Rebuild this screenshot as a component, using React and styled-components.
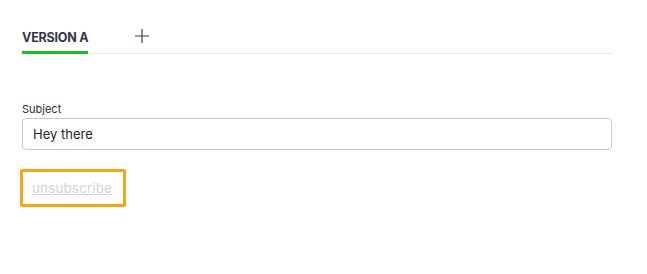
import styled, { createGlobalStyle } from "styled-components"

const GlobalStyle = createGlobalStyle`
    html, body {
        margin: 0;
        padding: 0;
        background: #ffffff;
        font-family: "Inter", "Noto Sans", sans-serif;
    }
`

export default function App() {
    return (
        <>
            <GlobalStyle />
            <Page>
                <Tabs>
                    <Tab active>VERSION A</Tab>
                    <AddTab aria-label="Add version">
                        <svg width="16" height="16" viewBox="0 0 16 16">
                            <path d="M8 1v14M1 8h14" stroke="#3b3d4a" strokeWidth="1.2" fill="none" />
                        </svg>
                    </AddTab>
                </Tabs>
                <Field>
                    <Label>Subject</Label>
                    <Input defaultValue="Hey there" />
                </Field>
                <Highlight>
                    <Unsubscribe href="#">unsubscribe</Unsubscribe>
                </Highlight>
            </Page>
        </>
    )
}

const Page = styled.div`
    width: 590px;
    padding: 22px 0 0 22px;
    display: flex;
    flex-direction: column;
    align-items: flex-start;
`
const Tabs = styled.div`
    width: 100%;
    height: 31px;
    display: flex;
    align-items: stretch;
    gap: 46px;
    border-bottom: 1px solid #e8e8ea;
`
const Tab = styled.div`
    display: flex;
    align-items: center;
    padding-top: 1px;
    font-size: 12.5px;
    font-weight: 700;
    color: #33364a;
    letter-spacing: -0.2px;
    border-bottom: 3px solid ${props => (props.active ? "#1fbf1f" : "transparent")};
    margin-bottom: -1px;
    box-sizing: border-box;
`
const AddTab = styled.button`
    background: none;
    border: none;
    padding: 0;
    margin-top: -4px;
    display: flex;
    align-items: center;
    cursor: pointer;
`
const Field = styled.div`
    width: 100%;
    margin-top: 48px;
    display: flex;
    flex-direction: column;
    gap: 2px;
`
const Label = styled.label`
    font-size: 11px;
    color: #2c2e3a;
    line-height: 14px;
`
const Input = styled.input`
    width: 100%;
    height: 32px;
    box-sizing: border-box;
    border: 1px solid #c7c8cc;
    border-radius: 4px;
    padding: 0 10px;
    font-family: inherit;
    font-size: 13px;
    color: #222430;
    outline: none;
`
const Highlight = styled.div`
    margin-top: 19px;
    margin-left: -2px;
    width: 106px;
    height: 38px;
    box-sizing: border-box;
    border: 3px solid #f5a515;
    border-radius: 2px;
    display: flex;
    align-items: center;
    padding-left: 9px;
`
const Unsubscribe = styled.a`
    font-size: 13.5px;
    letter-spacing: 0.1px;
    color: #d2d3d6;
    text-decoration: underline;
`
